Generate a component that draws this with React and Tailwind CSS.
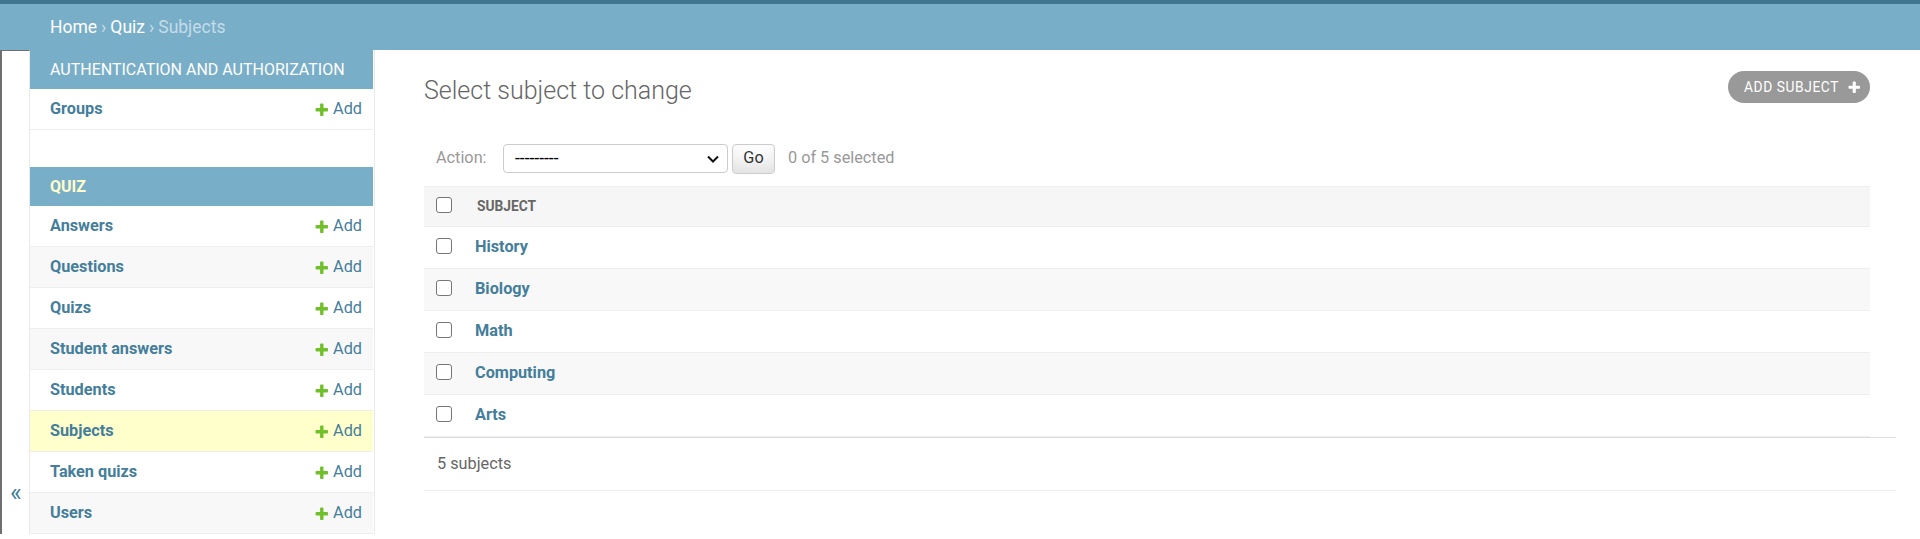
import React from "react";

const quizModels = [
  { name: "Answers", bg: "bg-white" },
  { name: "Questions", bg: "bg-[#f8f8f8]" },
  { name: "Quizs", bg: "bg-white" },
  { name: "Student answers", bg: "bg-[#f8f8f8]" },
  { name: "Students", bg: "bg-white" },
  { name: "Subjects", bg: "bg-[#ffffcc]" },
  { name: "Taken quizs", bg: "bg-white" },
  { name: "Users", bg: "bg-[#f8f8f8]" },
];

const subjects = ["History", "Biology", "Math", "Computing", "Arts"];

function PlusIcon({ className }) {
  return (
    <svg viewBox="128 128 1472 1472" className={className} fill="currentColor">
      <path d="M1600 796v192q0 40-28 68t-68 28h-416v416q0 40-28 68t-68 28h-192q-40 0-68-28t-28-68v-416h-416q-40 0-68-28t-28-68v-192q0-40 28-68t68-28h416v-416q0-40 28-68t68-28h192q40 0 68 28t28 68v416h416q40 0 68 28t28 68z" />
    </svg>
  );
}

function Checkbox() {
  return (
    <span className="block w-[16px] h-[16px] mb-[4px] rounded-[3px] border border-[#767676] bg-white" />
  );
}

function ModelRow({ name, bg }) {
  return (
    <div
      className={`h-[41px] flex items-center justify-between pl-[20px] pr-[11px] border-b border-[#eee] ${bg}`}
    >
      <span className="font-bold text-[#447e9b]">{name}</span>
      <span className="flex items-center gap-[5px] text-[#447e9b]">
        <PlusIcon className="w-[13px] h-[13px] text-[#70bf2b]" />
        Add
      </span>
    </div>
  );
}

export default function App() {
  return (
    <div className="min-h-[539px] bg-white font-['Roboto',sans-serif] text-[16.25px] text-[#333]">
      <div className="h-[4px] bg-[#417690]" />
      <div className="h-[46px] bg-[#79aec8] pl-[50px] flex items-center text-[17.5px] text-[#c4dce8]">
        <span className="text-white">Home</span>
        <span className="mx-[4px]">›</span>
        <span className="text-white">Quiz</span>
        <span className="mx-[4px]">›</span>
        <span>Subjects</span>
      </div>

      <div className="flex">
        {/* sidebar toggle */}
        <div className="w-[30px] shrink-0 border-r border-[#eaeaea] border-l-2 border-l-[#6f6f6f] border-t border-t-[#6f6f6f] pt-[429px] pl-[8px]">
          <span className="block text-[25px] leading-[25px] text-[#447e9b]">«</span>
        </div>

        {/* nav sidebar */}
        <div className="w-[345px] shrink-0 border-r border-[#eaeaea] pr-px">
          <div className="h-[39px] bg-[#79aec8] pl-[20px] flex items-center text-white text-[16px]">
            AUTHENTICATION AND AUTHORIZATION
          </div>
          <ModelRow name="Groups" bg="bg-white" />

          <div className="mt-[37px] h-[39px] bg-[#79aec8] pl-[20px] flex items-center font-bold text-[#ffffcc] text-[16px]">
            QUIZ
          </div>
          {quizModels.map((m) => (
            <ModelRow key={m.name} name={m.name} bg={m.bg} />
          ))}
        </div>

        {/* content */}
        <div className="flex-1 min-w-0 pl-[49px] pr-[50px] pt-[21px]">
          <div className="flex items-start justify-between">
            <h1 className="mt-[5px] text-[25px] leading-[30px] font-light text-[#666]">
              Select subject to change
            </h1>
            <div className="h-[32px] pl-[16px] pr-[10px] rounded-full bg-[#999] flex items-center gap-[9px] text-white text-[13.75px] tracking-[0.6px]">
              ADD SUBJECT
              <PlusIcon className="w-[12px] h-[12px] text-white" />
            </div>
          </div>

          <div className="mt-[25px] h-[55px] pl-[12px] flex items-center">
            <span className="w-[67px] text-[#999]">Action:</span>
            <div className="w-[225px] h-[29px] border border-[#ccc] rounded-[4px] pl-[11px] pr-[8px] flex items-center justify-between text-[17.5px] text-black">
              <span className="leading-none">---------</span>
              <svg viewBox="0 0 12 8" className="w-[12px] h-[8px]" fill="none" stroke="#111" strokeWidth="2">
                <polyline points="1,1.5 6,6.5 11,1.5" />
              </svg>
            </div>
            <div className="ml-[4px] w-[43px] h-[30px] border border-[#ccc] rounded-[4px] bg-white shadow-[inset_0_-19px_25px_-12px_rgba(0,0,0,0.15)] flex items-center justify-center text-[#333]">
              Go
            </div>
            <span className="ml-[13px] text-[#999]">0 of 5 selected</span>
          </div>

          <div className="h-[41px] bg-[#f6f6f6] border-y border-[#eee] flex items-center pl-[12px]">
            <Checkbox />
            <span className="ml-[25px] text-[13.75px] font-bold text-[#666]">SUBJECT</span>
          </div>
          {subjects.map((s, i) => (
            <div
              key={s}
              className={`h-[42px] border-b border-[#eee] flex items-center pl-[12px] ${
                i % 2 === 1 ? "bg-[#f8f8f8]" : "bg-white"
              }`}
            >
              <Checkbox />
              <span className="ml-[23px] font-bold text-[#447e9b]">{s}</span>
            </div>
          ))}

          <div className="w-[calc(100%+26px)] h-[54px] border-t border-[#ddd] border-b border-b-[#eee] pl-[13px] flex items-center text-[#666]">
            5 subjects
          </div>
        </div>
      </div>
    </div>
  );
}
